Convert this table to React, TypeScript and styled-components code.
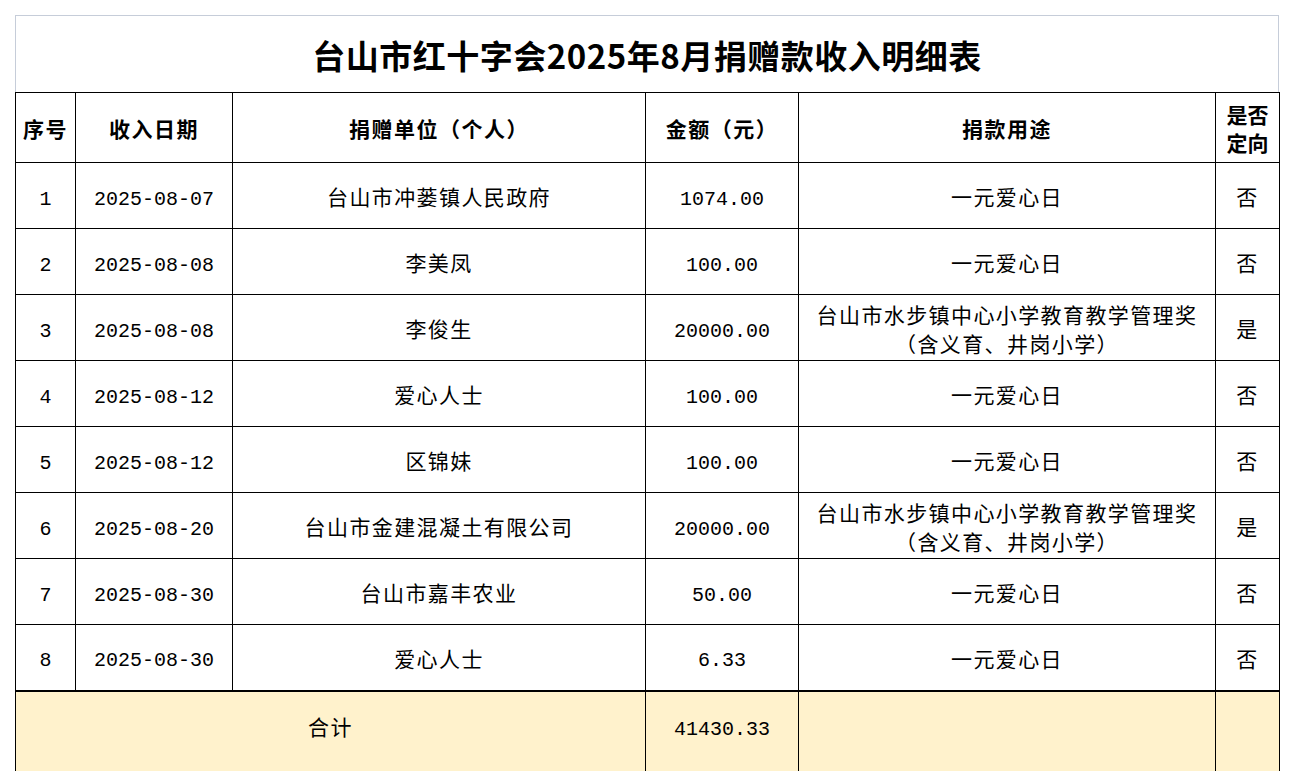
import * as React from "react";
import styled, { createGlobalStyle } from "styled-components";

type Row = {
  no: number;
  date: string;
  donor: string;
  amount: string;
  purpose: string;
  directed: string;
};

const rows: Row[] = [
  { no: 1, date: "2025-08-07", donor: "台山市冲蒌镇人民政府", amount: "1074.00", purpose: "一元爱心日", directed: "否" },
  { no: 2, date: "2025-08-08", donor: "李美凤", amount: "100.00", purpose: "一元爱心日", directed: "否" },
  { no: 3, date: "2025-08-08", donor: "李俊生", amount: "20000.00", purpose: "台山市水步镇中心小学教育教学管理奖（含义育、井岗小学）", directed: "是" },
  { no: 4, date: "2025-08-12", donor: "爱心人士", amount: "100.00", purpose: "一元爱心日", directed: "否" },
  { no: 5, date: "2025-08-12", donor: "区锦妹", amount: "100.00", purpose: "一元爱心日", directed: "否" },
  { no: 6, date: "2025-08-20", donor: "台山市金建混凝土有限公司", amount: "20000.00", purpose: "台山市水步镇中心小学教育教学管理奖（含义育、井岗小学）", directed: "是" },
  { no: 7, date: "2025-08-30", donor: "台山市嘉丰农业", amount: "50.00", purpose: "一元爱心日", directed: "否" },
  { no: 8, date: "2025-08-30", donor: "爱心人士", amount: "6.33", purpose: "一元爱心日", directed: "否" },
];

const widths = [60, 157, 413, 153, 417, 64];

export default function App() {
  return (
    <>
      <GlobalStyle />
      <Page>
        <Sheet>
          <TitleBox>台山市红十字会2025年8月捐赠款收入明细表</TitleBox>
          <Table>
            <colgroup>
              {widths.map((w, i) => (
                <col key={i} style={{ width: w }} />
              ))}
            </colgroup>
            <thead>
              <tr>
                <HeadCell>序号</HeadCell>
                <HeadCell>收入日期</HeadCell>
                <HeadCell>捐赠单位（个人）</HeadCell>
                <HeadCell>金额（元）</HeadCell>
                <HeadCell>捐款用途</HeadCell>
                <HeadCell $narrow>是否定向</HeadCell>
              </tr>
            </thead>
            <tbody>
              {rows.map((r) => (
                <BodyRow key={r.no}>
                  <Cell $mono>{r.no}</Cell>
                  <Cell $mono>{r.date}</Cell>
                  <Cell>{r.donor}</Cell>
                  <Cell $mono>{r.amount}</Cell>
                  <Cell $wrap>{r.purpose}</Cell>
                  <Cell>{r.directed}</Cell>
                </BodyRow>
              ))}
              <TotalRow>
                <Cell colSpan={3}>合计</Cell>
                <Cell $mono>41430.33</Cell>
                <Cell />
                <Cell />
              </TotalRow>
            </tbody>
          </Table>
        </Sheet>
      </Page>
    </>
  );
}

const GlobalStyle = createGlobalStyle`
  html, body {
    margin: 0;
    background: #ffffff;
  }
  body {
    font-family: "Noto Sans CJK SC", "Liberation Sans", sans-serif;
    color: #000000;
  }
`;

const Page = styled.div`
  padding: 15px;
`;

const Sheet = styled.div`
  width: 1264px;
`;

const TitleBox = styled.div`
  height: 77px;
  border: 1px solid #c6cdd9;
  border-bottom: none;
  display: flex;
  align-items: center;
  justify-content: center;
  font-size: 33px;
  font-weight: 700;
  letter-spacing: 0.5px;
  padding-top: 2px;
  box-sizing: border-box;
`;

const Table = styled.table`
  width: 1264px;
  table-layout: fixed;
  border-collapse: collapse;
`;

const HeadCell = styled.th<{ $narrow?: boolean }>`
  height: 70px;
  border: 1px solid #000000;
  padding: ${(p) => (p.$narrow ? "0 6px" : "0")};
  font-size: 21px;
  font-weight: 700;
  letter-spacing: ${(p) => (p.$narrow ? "0" : "1.5px")};
  line-height: 28px;
  text-align: center;
  vertical-align: middle;
  box-sizing: border-box;
`;

const Cell = styled.td<{ $mono?: boolean; $wrap?: boolean }>`
  border: 1px solid #000000;
  padding: ${(p) => (p.$wrap ? "0 8px" : "0")};
  padding-top: ${(p) => (p.$mono ? "7px" : "2px")};
  font-family: ${(p) =>
    p.$mono
      ? `"Liberation Mono", monospace`
      : `"Noto Sans CJK SC", "Liberation Sans", sans-serif`};
  font-size: ${(p) => (p.$mono ? "20px" : "21px")};
  font-weight: 400;
  letter-spacing: ${(p) => (p.$mono ? "0" : "1.4px")};
  line-height: 29px;
  text-align: center;
  vertical-align: middle;
`;

const BodyRow = styled.tr`
  height: 66px;
`;

const TotalRow = styled.tr`
  height: 84px;
  background: #fff2cc;

  td {
    border-top: 2px solid #000000;
    padding-bottom: 14px;
  }
`;
